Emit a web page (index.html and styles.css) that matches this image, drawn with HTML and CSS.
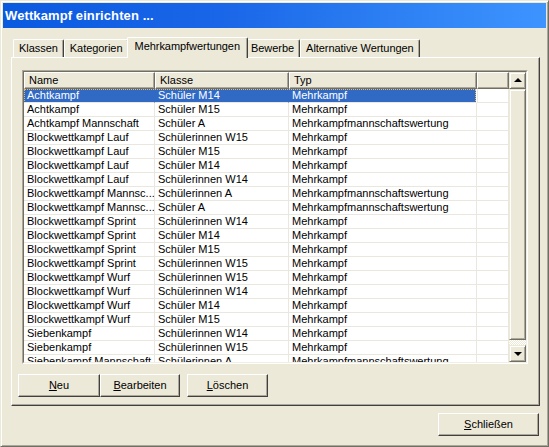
FILE: index.html
```html
<!DOCTYPE html>
<html>
<head>
<meta charset="utf-8">
<link rel="stylesheet" href="styles.css">
</head>
<body>
<div class="window">
  <div class="titlebar"><span class="title">Wettkampf einrichten ...</span></div>
  <div class="content">
    <div class="tabs">
      <div class="tab">Klassen</div>
      <div class="tab">Kategorien</div>
      <div class="tab active">Mehrkampfwertungen</div>
      <div class="tab">Bewerbe</div>
      <div class="tab">Alternative Wertungen</div>
    </div>
    <div class="panel">
      <div class="listbox">
        <div class="listinner">
          <div class="grid">
            <div class="head">
              <div class="hc">Name</div>
              <div class="hc">Klasse</div>
              <div class="hc">Typ</div>
              <div class="hc"></div>
            </div>
            <div class="rows">
              <div class="row sel"><div class="band"></div><div class="c">Achtkampf</div><div class="c">Schüler M14</div><div class="c">Mehrkampf</div><div class="c x"></div></div>
              <div class="row"><div class="c">Achtkampf</div><div class="c">Schüler M15</div><div class="c">Mehrkampf</div><div class="c x"></div></div>
              <div class="row"><div class="c">Achtkampf Mannschaft</div><div class="c">Schüler A</div><div class="c">Mehrkampfmannschaftswertung</div><div class="c x"></div></div>
              <div class="row"><div class="c">Blockwettkampf Lauf</div><div class="c">Schülerinnen W15</div><div class="c">Mehrkampf</div><div class="c x"></div></div>
              <div class="row"><div class="c">Blockwettkampf Lauf</div><div class="c">Schüler M15</div><div class="c">Mehrkampf</div><div class="c x"></div></div>
              <div class="row"><div class="c">Blockwettkampf Lauf</div><div class="c">Schüler M14</div><div class="c">Mehrkampf</div><div class="c x"></div></div>
              <div class="row"><div class="c">Blockwettkampf Lauf</div><div class="c">Schülerinnen W14</div><div class="c">Mehrkampf</div><div class="c x"></div></div>
              <div class="row"><div class="c">Blockwettkampf Mannsc...</div><div class="c">Schülerinnen A</div><div class="c">Mehrkampfmannschaftswertung</div><div class="c x"></div></div>
              <div class="row"><div class="c">Blockwettkampf Mannsc...</div><div class="c">Schüler A</div><div class="c">Mehrkampfmannschaftswertung</div><div class="c x"></div></div>
              <div class="row"><div class="c">Blockwettkampf Sprint</div><div class="c">Schülerinnen W14</div><div class="c">Mehrkampf</div><div class="c x"></div></div>
              <div class="row"><div class="c">Blockwettkampf Sprint</div><div class="c">Schüler M14</div><div class="c">Mehrkampf</div><div class="c x"></div></div>
              <div class="row"><div class="c">Blockwettkampf Sprint</div><div class="c">Schüler M15</div><div class="c">Mehrkampf</div><div class="c x"></div></div>
              <div class="row"><div class="c">Blockwettkampf Sprint</div><div class="c">Schülerinnen W15</div><div class="c">Mehrkampf</div><div class="c x"></div></div>
              <div class="row"><div class="c">Blockwettkampf Wurf</div><div class="c">Schülerinnen W15</div><div class="c">Mehrkampf</div><div class="c x"></div></div>
              <div class="row"><div class="c">Blockwettkampf Wurf</div><div class="c">Schülerinnen W14</div><div class="c">Mehrkampf</div><div class="c x"></div></div>
              <div class="row"><div class="c">Blockwettkampf Wurf</div><div class="c">Schüler M14</div><div class="c">Mehrkampf</div><div class="c x"></div></div>
              <div class="row"><div class="c">Blockwettkampf Wurf</div><div class="c">Schüler M15</div><div class="c">Mehrkampf</div><div class="c x"></div></div>
              <div class="row"><div class="c">Siebenkampf</div><div class="c">Schülerinnen W14</div><div class="c">Mehrkampf</div><div class="c x"></div></div>
              <div class="row"><div class="c">Siebenkampf</div><div class="c">Schülerinnen W15</div><div class="c">Mehrkampf</div><div class="c x"></div></div>
              <div class="row"><div class="c">Siebenkampf Mannschaft</div><div class="c">Schülerinnen A</div><div class="c">Mehrkampfmannschaftswertung</div><div class="c x"></div></div>
            </div>
          </div>
          <div class="scrollbar">
            <div class="sbtn"><span class="arrow up"></span></div>
            <div class="thumb"></div>
            <div class="track"></div>
            <div class="sbtn"><span class="arrow down"></span></div>
          </div>
        </div>
      </div>
      <div class="buttons">
        <div class="btn w-neu"><u>N</u>eu</div>
        <div class="btn w-bearb"><u>B</u>earbeiten</div>
        <div class="btn w-losch"><u>L</u>öschen</div>
      </div>
    </div>
    <div class="footer">
      <div class="btn w-close"><u>S</u>chließen</div>
    </div>
  </div>
</div>
</body>
</html>
```

FILE: styles.css
```css
html, body {
  margin: 0;
  padding: 0;
}
body {
  width: 549px;
  height: 447px;
  overflow: hidden;
  background: #ECE9D8;
  font-family: "Liberation Sans", Arial, sans-serif;
  font-size: 11px;
  color: #000;
}
.window {
  box-sizing: border-box;
  width: 549px;
  height: 447px;
  background: #ECE9D8;
  border: 1px solid;
  border-color: #ECE9D8 #716F64 #716F64 #ECE9D8;
  padding: 2px;
  box-shadow: inset 1px 1px #fff, inset -1px -1px #ACA899;
  display: flex;
  flex-direction: column;
}
.titlebar {
  height: 25px;
  flex: none;
  background: linear-gradient(to right, #0A5AE0 0%, #1A66E8 40%, #2F82F4 75%, #3D94FF 100%);
  display: flex;
  align-items: center;
  padding-left: 2px;
}
.title {
  color: #fff;
  font-weight: bold;
  font-size: 13px;
  letter-spacing: 0.1px;
}
.content {
  flex: 1;
  padding: 9px 6px 0 8px;
  display: flex;
  flex-direction: column;
}
.tabs {
  display: flex;
  align-items: flex-end;
  height: 20px;
  padding-left: 2px;
  position: relative;
  z-index: 2;
}
.tab {
  box-sizing: border-box;
  height: 18px;
  line-height: 16px;
  padding: 0 5px;
  border-top: 1px solid #fff;
  border-left: 1px solid #fff;
  border-right: 1px solid #404040;
  border-top-left-radius: 2px;
  border-top-right-radius: 2px;
  box-shadow: inset -1px 0 #ACA899;
  white-space: nowrap;
  letter-spacing: -0.05px;
}
.tab.active {
  height: 21px;
  margin: 0 -2px -1px;
  padding: 0 7px 3px;
  line-height: 16px;
  background: #ECE9D8;
  position: relative;
}
.tab.active + .tab {
  border-left: none;
}
.panel {
  box-sizing: border-box;
  width: 529px;
  height: 349px;
  border: 1px solid;
  border-color: #fff #404040 #404040 #fff;
  box-shadow: inset -1px -1px #ACA899;
  padding: 12px 0 0 10px;
  display: flex;
  flex-direction: column;
  position: relative;
  z-index: 1;
}
.listbox {
  box-sizing: border-box;
  width: 506px;
  height: 294px;
  border: 1px solid;
  border-color: #ACA899 #fff #fff #ACA899;
}
.listinner {
  box-sizing: border-box;
  height: 100%;
  border: 1px solid;
  border-color: #716F64 #F1EFE2 #F1EFE2 #716F64;
  background: #fff;
  display: flex;
  overflow: hidden;
}
.grid {
  flex: 1;
  display: flex;
  flex-direction: column;
  overflow: hidden;
}
.head {
  display: grid;
  grid-template-columns: 131px 134px 188px 1fr;
  height: 17px;
  flex: none;
}
.hc {
  box-sizing: border-box;
  background: #ECE9D8;
  border-top: 1px solid #fff;
  border-left: 1px solid #fff;
  border-right: 1px solid #716F64;
  border-bottom: 1px solid #716F64;
  box-shadow: inset -1px -1px #ACA899;
  padding-left: 4px;
  line-height: 14px;
  white-space: nowrap;
}
.rows {
  display: flex;
  flex-direction: column;
}
.row {
  display: grid;
  grid-template-columns: 131px 134px 188px 1fr;
  height: 14px;
  flex: none;
}
.c {
  grid-row: 1;
  box-sizing: border-box;
  border-right: 1px solid #EAE8DE;
  border-bottom: 1px solid #EAE8DE;
  padding-left: 3px;
  line-height: 13px;
  white-space: nowrap;
  overflow: hidden;
  position: relative;
}
.row.sel .band {
  grid-row: 1;
  grid-column: 1 / 4;
  background: #316AC5;
  outline: 1px dotted #E9B96A;
  outline-offset: -1px;
  margin-right: 1px;
}
.row.sel .c {
  color: #fff;
  border-right-color: transparent;
}
.row.sel .c.x {
  color: #000;
  border-right-color: #EAE8DE;
  border-left: 1px solid #EAE8DE;
}
.row.sel .c:nth-child(2) { grid-column: 1; }
.row.sel .c:nth-child(3) { grid-column: 2; }
.row.sel .c:nth-child(4) { grid-column: 3; }
.row.sel .c:nth-child(5) { grid-column: 4; }
.scrollbar {
  width: 17px;
  flex: none;
  display: flex;
  flex-direction: column;
  background: #ECE9D8;
}
.sbtn, .thumb {
  box-sizing: border-box;
  background: #ECE9D8;
  border: 1px solid;
  border-color: #ECE9D8 #716F64 #716F64 #ECE9D8;
  box-shadow: inset 1px 1px #fff, inset -1px -1px #ACA899;
}
.sbtn {
  height: 17px;
  flex: none;
  display: flex;
  align-items: center;
  justify-content: center;
}
.thumb {
  height: 251px;
  flex: none;
}
.track {
  flex: 1;
  background-color: #ECE9D8;
  background-image: repeating-conic-gradient(#fff 0 25%, #ECE9D8 0 50%);
  background-size: 2px 2px;
}
.arrow {
  width: 0;
  height: 0;
  border-left: 4px solid transparent;
  border-right: 4px solid transparent;
}
.arrow.up {
  border-bottom: 4px solid #000;
  margin-top: -1px;
}
.arrow.down {
  border-top: 4px solid #000;
}
.buttons {
  display: flex;
  margin-top: 10px;
  margin-left: -4px;
}
.btn {
  box-sizing: border-box;
  height: 23px;
  line-height: 20px;
  text-align: center;
  background: #ECE9D8;
  border: 1px solid;
  border-color: #fff #404040 #404040 #fff;
  box-shadow: inset -1px -1px #ACA899;
}
.w-neu { width: 82px; }
.w-bearb { width: 80px; }
.w-losch { width: 81px; margin-left: 7px; }
.w-close { width: 101px; }
.footer {
  display: flex;
  justify-content: flex-end;
  margin-top: 7px;
  padding-right: 1px;
}
```
